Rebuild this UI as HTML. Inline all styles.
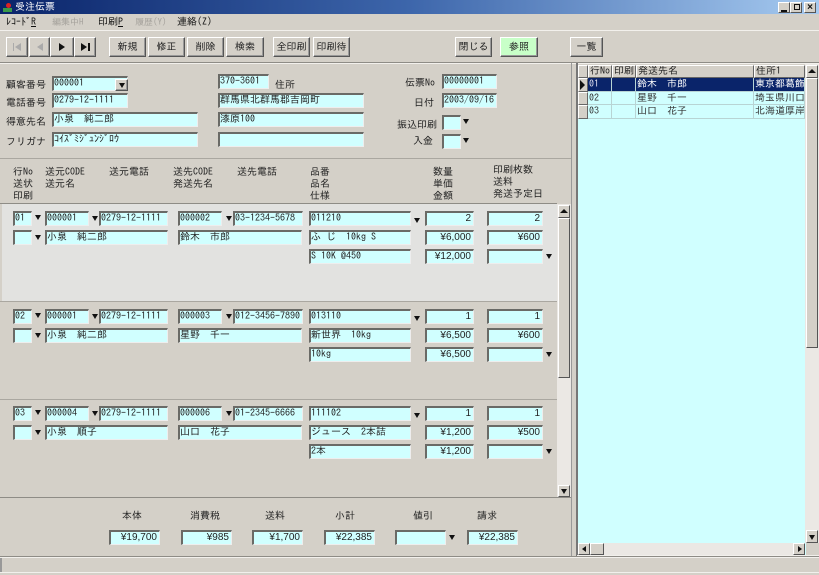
<!DOCTYPE html>
<html><head><meta charset="utf-8"><style>
html,body{margin:0;padding:0}
body{width:819px;height:575px;position:relative;overflow:hidden;background:#d4d0c8;font:10px/13px "IPAGothic","Liberation Sans",sans-serif;color:#111;filter:blur(.3px)}
div,span{position:absolute;box-sizing:border-box;white-space:nowrap}
.f{background:#d0ffff;height:15px;border-top:2px solid #6a6a66;border-left:2px solid #6a6a66;border-right:1px solid #eee;border-bottom:1px solid #eee;padding-left:0;line-height:11px;font-size:10px;color:#222;overflow:hidden}
.r{text-align:right;padding-right:2px;font-family:"Liberation Sans","IPAGothic",sans-serif}
.l{font-size:10px;color:#222}
.b{background:#d4d0c8;border:1px solid;border-color:#fff #555 #555 #fff;box-shadow:inset -1px -1px 0 #999;text-align:center;line-height:18px;height:20px;font-size:10px;color:#222}
.t{width:0;height:0;border-left:3px solid transparent;border-right:3px solid transparent;border-top:5px solid #111}
.u{width:0;height:0;border-left:4px solid transparent;border-right:4px solid transparent;border-bottom:4px solid #111}
.sb{background:#d4d0c8;border:1px solid;border-color:#fff #555 #555 #fff}
.g{font-size:10px;line-height:13px;height:13px;padding-left:1px;overflow:hidden;color:#333;border-right:1px solid #b8d4d4;border-bottom:1px solid #b8d4d4}
.h{background:#d4d0c8;border:1px solid;border-color:#fff #666 #666 #fff;font-size:10px;line-height:11px;padding-left:1px;overflow:hidden;height:13px;color:#222}
.rt{width:0;height:0;border-left:6px solid #111;border-top:4px solid transparent;border-bottom:4px solid transparent}
.lt{width:0;height:0;border-right:6px solid #aaa;border-top:4px solid transparent;border-bottom:4px solid transparent}
</style></head><body>

<!-- title bar -->
<div style="left:0;top:0;width:819px;height:14px;background:linear-gradient(90deg,#0a246a,#3d66ab 50%,#a6caf0)"></div>
<div style="left:6px;top:3px;width:5px;height:5px;background:#d22;border-radius:3px"></div>
<div style="left:3px;top:8px;width:9px;height:4px;background:#3a9a4a"></div>
<span style="left:15px;top:1px;color:#fff;font-size:10px">受注伝票</span>
<div class="sb" style="left:778px;top:2px;width:12px;height:11px"><div style="left:2px;top:7px;width:6px;height:2px;background:#111"></div></div>
<div class="sb" style="left:790px;top:2px;width:12px;height:11px"><div style="left:3px;top:1px;width:6px;height:6px;border:1px solid #111"></div></div>
<div class="sb" style="left:804px;top:2px;width:12px;height:11px;font:bold 10px/9px 'Liberation Sans',sans-serif;text-align:center">×</div>

<!-- menu -->
<span style="left:6px;top:16px;font-size:10px">ﾚｺｰﾄﾞ<u>R</u></span>
<span style="left:52px;top:16px;font-size:9px;color:#a5a29c">編集中H</span>
<span style="left:98px;top:16px;font-size:10px">印刷<u>P</u></span>
<span style="left:135px;top:16px;font-size:9px;color:#a5a29c">履歴(Y)</span>
<span style="left:177px;top:16px;font-size:10px">連絡(Z)</span>
<div style="left:0;top:30px;width:819px;height:1px;background:#f2f0ec"></div>

<!-- toolbar -->
<div class="b" style="left:6px;top:37px;width:22px"><div style="left:6px;top:5px;width:1px;height:8px;background:#aaa"></div><div class="lt" style="left:8px;top:5px"></div></div>
<div class="b" style="left:29px;top:37px;width:21px"><div class="lt" style="left:7px;top:5px"></div></div>
<div class="b" style="left:50px;top:37px;width:24px"><div class="rt" style="left:8px;top:5px"></div></div>
<div class="b" style="left:74px;top:37px;width:22px"><div class="rt" style="left:6px;top:5px"></div><div style="left:13px;top:5px;width:2px;height:8px;background:#111"></div></div>
<div class="b" style="left:109px;top:37px;width:37px">新規</div>
<div class="b" style="left:148px;top:37px;width:37px">修正</div>
<div class="b" style="left:187px;top:37px;width:37px">削除</div>
<div class="b" style="left:226px;top:37px;width:38px">検索</div>
<div class="b" style="left:273px;top:37px;width:37px">全印刷</div>
<div class="b" style="left:313px;top:37px;width:37px">印刷待</div>
<div class="b" style="left:455px;top:37px;width:37px">閉じる</div>
<div class="b" style="left:500px;top:37px;width:38px;background:#c8ffc8">参照</div>
<div class="b" style="left:570px;top:37px;width:33px">一覧</div>
<div style="left:0;top:62px;width:819px;height:1px;background:#8e8c86"></div>
<div style="left:0;top:63px;width:819px;height:1px;background:#f2f0ec"></div>

<!-- header form -->
<span class="l" style="left:6px;top:79px">顧客番号</span>
<div class="f" style="left:52px;top:76px;width:76px">000001</div>
<div class="b" style="left:115px;top:79px;width:13px;height:12px;line-height:10px"><div class="t" style="left:3px;top:3px"></div></div>
<span class="l" style="left:6px;top:97px">電話番号</span>
<div class="f" style="left:52px;top:93px;width:76px">0279-12-1111</div>
<span class="l" style="left:6px;top:116px">得意先名</span>
<div class="f" style="left:52px;top:112px;width:146px">小泉　純二郎</div>
<span class="l" style="left:6px;top:136px">フリガナ</span>
<div class="f" style="left:52px;top:132px;width:146px">ｺｲｽﾞﾐｼﾞｭﾝｼﾞﾛｳ</div>
<div class="f" style="left:218px;top:74px;width:51px">370-3601</div>
<span class="l" style="left:275px;top:79px">住所</span>
<div class="f" style="left:218px;top:93px;width:146px">群馬県北群馬郡吉岡町</div>
<div class="f" style="left:218px;top:112px;width:146px">漆原100</div>
<div class="f" style="left:218px;top:132px;width:146px"></div>
<span class="l" style="left:405px;top:77px">伝票No</span>
<div class="f" style="left:442px;top:74px;width:55px">00000001</div>
<span class="l" style="left:414px;top:97px">日付</span>
<div class="f" style="left:442px;top:93px;width:55px">2003/09/16</div>
<span class="l" style="left:397px;top:119px">振込印刷</span>
<div class="f" style="left:442px;top:115px;width:19px"></div><div class="t" style="left:463px;top:119px"></div>
<span class="l" style="left:413px;top:135px">入金</span>
<div class="f" style="left:442px;top:134px;width:19px"></div><div class="t" style="left:463px;top:138px"></div>
<div style="left:0;top:158px;width:571px;height:1px;background:#aaa7a0"></div>

<!-- column heads -->
<span class="l" style="left:13px;top:166px;line-height:12px">行No<br>送状<br>印刷</span>
<span class="l" style="left:45px;top:166px;line-height:12px">送元CODE<br>送元名</span>
<span class="l" style="left:109px;top:166px;line-height:12px">送元電話</span>
<span class="l" style="left:173px;top:166px;line-height:12px">送先CODE<br>発送先名</span>
<span class="l" style="left:237px;top:166px;line-height:12px">送先電話</span>
<span class="l" style="left:310px;top:166px;line-height:12px">品番<br>品名<br>仕様</span>
<span class="l" style="left:433px;top:166px;line-height:12px">数量<br>単価<br>金額</span>
<span class="l" style="left:493px;top:164px;line-height:12px">印刷枚数<br>送料<br>発送予定日</span>
<div style="left:0;top:203px;width:557px;height:1px;background:#8e8c86"></div>

<!-- row 1 -->
<div style="left:2px;top:204px;width:555px;height:97px;background:#e2e2e0"></div>
<div style="left:0;top:301px;width:557px;height:1px;background:#aaa7a0"></div>
<div class="f" style="left:13px;top:211px;width:19px">01</div><div class="t" style="left:35px;top:215px"></div>
<div class="f" style="left:45px;top:211px;width:44px">000001</div><div class="t" style="left:92px;top:216px"></div>
<div class="f" style="left:99px;top:211px;width:69px">0279-12-1111</div>
<div class="f" style="left:178px;top:211px;width:44px">000002</div><div class="t" style="left:226px;top:216px"></div>
<div class="f" style="left:233px;top:211px;width:70px">03-1234-5678</div>
<div class="f" style="left:309px;top:211px;width:102px">011210</div><div class="t" style="left:414px;top:218px"></div>
<div class="f r" style="left:425px;top:211px;width:49px">2</div>
<div class="f r" style="left:487px;top:211px;width:56px">2</div>
<div class="f" style="left:13px;top:230px;width:19px"></div><div class="t" style="left:35px;top:235px"></div>
<div class="f" style="left:45px;top:230px;width:123px">小泉　純二郎</div>
<div class="f" style="left:178px;top:230px;width:124px">鈴木　市郎</div>
<div class="f" style="left:309px;top:230px;width:102px">ふ じ　10kg S</div>
<div class="f r" style="left:425px;top:230px;width:49px">¥6,000</div>
<div class="f r" style="left:487px;top:230px;width:56px">¥600</div>
<div class="f" style="left:309px;top:249px;width:102px">S 10K @450</div>
<div class="f r" style="left:425px;top:249px;width:49px">¥12,000</div>
<div class="f" style="left:487px;top:249px;width:56px"></div><div class="t" style="left:546px;top:254px"></div>

<!-- row 2 -->
<div style="left:0;top:399px;width:557px;height:1px;background:#aaa7a0"></div>
<div class="f" style="left:13px;top:309px;width:19px">02</div><div class="t" style="left:35px;top:313px"></div>
<div class="f" style="left:45px;top:309px;width:44px">000001</div><div class="t" style="left:92px;top:314px"></div>
<div class="f" style="left:99px;top:309px;width:69px">0279-12-1111</div>
<div class="f" style="left:178px;top:309px;width:44px">000003</div><div class="t" style="left:226px;top:314px"></div>
<div class="f" style="left:233px;top:309px;width:70px">012-3456-7890</div>
<div class="f" style="left:309px;top:309px;width:102px">013110</div><div class="t" style="left:414px;top:316px"></div>
<div class="f r" style="left:425px;top:309px;width:49px">1</div>
<div class="f r" style="left:487px;top:309px;width:56px">1</div>
<div class="f" style="left:13px;top:328px;width:19px"></div><div class="t" style="left:35px;top:333px"></div>
<div class="f" style="left:45px;top:328px;width:123px">小泉　純二郎</div>
<div class="f" style="left:178px;top:328px;width:124px">星野　千一</div>
<div class="f" style="left:309px;top:328px;width:102px">新世界　10kg</div>
<div class="f r" style="left:425px;top:328px;width:49px">¥6,500</div>
<div class="f r" style="left:487px;top:328px;width:56px">¥600</div>
<div class="f" style="left:309px;top:347px;width:102px">10kg</div>
<div class="f r" style="left:425px;top:347px;width:49px">¥6,500</div>
<div class="f" style="left:487px;top:347px;width:56px"></div><div class="t" style="left:546px;top:352px"></div>

<!-- row 3 -->
<div class="f" style="left:13px;top:406px;width:19px">03</div><div class="t" style="left:35px;top:410px"></div>
<div class="f" style="left:45px;top:406px;width:44px">000004</div><div class="t" style="left:92px;top:411px"></div>
<div class="f" style="left:99px;top:406px;width:69px">0279-12-1111</div>
<div class="f" style="left:178px;top:406px;width:44px">000006</div><div class="t" style="left:226px;top:411px"></div>
<div class="f" style="left:233px;top:406px;width:70px">01-2345-6666</div>
<div class="f" style="left:309px;top:406px;width:102px">111102</div><div class="t" style="left:414px;top:413px"></div>
<div class="f r" style="left:425px;top:406px;width:49px">1</div>
<div class="f r" style="left:487px;top:406px;width:56px">1</div>
<div class="f" style="left:13px;top:425px;width:19px"></div><div class="t" style="left:35px;top:430px"></div>
<div class="f" style="left:45px;top:425px;width:123px">小泉　順子</div>
<div class="f" style="left:178px;top:425px;width:124px">山口　花子</div>
<div class="f" style="left:309px;top:425px;width:102px">ジュース　2本詰</div>
<div class="f r" style="left:425px;top:425px;width:49px">¥1,200</div>
<div class="f r" style="left:487px;top:425px;width:56px">¥500</div>
<div class="f" style="left:309px;top:444px;width:102px">2本</div>
<div class="f r" style="left:425px;top:444px;width:49px">¥1,200</div>
<div class="f" style="left:487px;top:444px;width:56px"></div><div class="t" style="left:546px;top:449px"></div>

<!-- left scrollbar -->
<div style="left:557px;top:204px;width:14px;height:293px;background:#ebe8e4"></div>
<div class="sb" style="left:558px;top:205px;width:12px;height:13px"><div class="u" style="left:1px;top:3px"></div></div>
<div class="sb" style="left:558px;top:218px;width:12px;height:160px"></div>
<div class="sb" style="left:558px;top:485px;width:12px;height:12px"><div class="t" style="left:2px;top:3px"></div></div>
<div style="left:571px;top:63px;width:1px;height:494px;background:#999"></div>
<div style="left:576px;top:63px;width:2px;height:494px;background:#777"></div>

<!-- totals -->
<div style="left:0;top:497px;width:571px;height:1px;background:#8e8c86"></div>
<span class="l" style="left:122px;top:510px">本体</span>
<span class="l" style="left:190px;top:510px">消費税</span>
<span class="l" style="left:265px;top:510px">送料</span>
<span class="l" style="left:335px;top:510px">小計</span>
<span class="l" style="left:413px;top:510px">値引</span>
<span class="l" style="left:477px;top:510px">請求</span>
<div class="f r" style="left:109px;top:530px;width:51px">¥19,700</div>
<div class="f r" style="left:181px;top:530px;width:51px">¥985</div>
<div class="f r" style="left:252px;top:530px;width:51px">¥1,700</div>
<div class="f r" style="left:324px;top:530px;width:51px">¥22,385</div>
<div class="f" style="left:395px;top:530px;width:51px"></div><div class="t" style="left:449px;top:535px"></div>
<div class="f r" style="left:467px;top:530px;width:51px">¥22,385</div>

<!-- status bar -->
<div style="left:0;top:556px;width:819px;height:1px;background:#8e8c86"></div>
<div style="left:0;top:557px;width:819px;height:1px;background:#f2f0ec"></div>
<div style="left:0;top:572px;width:819px;height:1px;background:#f2f0ec"></div>
<div style="left:0;top:558px;width:2px;height:14px;background:#999"></div>

<!-- grid -->
<div style="left:578px;top:65px;width:228px;height:490px;background:#d0ffff"></div>
<div class="h" style="left:578px;top:65px;width:10px"></div>
<div class="h" style="left:588px;top:65px;width:24px">行No</div>
<div class="h" style="left:612px;top:65px;width:24px">印刷</div>
<div class="h" style="left:636px;top:65px;width:118px">発送先名</div>
<div class="h" style="left:754px;top:65px;width:51px">住所1</div>
<div class="h" style="left:578px;top:78px;width:10px;height:14px"><div style="left:1px;top:1px;width:0;height:0;border-left:5px solid #111;border-top:5px solid transparent;border-bottom:5px solid transparent"></div></div>
<div class="h" style="left:578px;top:92px;width:10px"></div>
<div class="h" style="left:578px;top:105px;width:10px;height:14px"></div>
<div style="left:588px;top:78px;width:217px;height:14px;background:#0a246a"></div>
<div class="g" style="left:588px;top:78px;width:24px;color:#dde;height:14px">01</div>
<div class="g" style="left:612px;top:78px;width:24px;height:14px"></div>
<div class="g" style="left:636px;top:78px;width:118px;color:#fff;height:14px">鈴木　市郎</div>
<div class="g" style="left:754px;top:78px;width:51px;color:#fff;height:14px">東京都葛飾区</div>
<div class="g" style="left:588px;top:92px;width:24px">02</div>
<div class="g" style="left:612px;top:92px;width:24px"></div>
<div class="g" style="left:636px;top:92px;width:118px">星野　千一</div>
<div class="g" style="left:754px;top:92px;width:51px">埼玉県川口市</div>
<div class="g" style="left:588px;top:105px;width:24px;height:14px">03</div>
<div class="g" style="left:612px;top:105px;width:24px;height:14px"></div>
<div class="g" style="left:636px;top:105px;width:118px;height:14px">山口　花子</div>
<div class="g" style="left:754px;top:105px;width:51px;height:14px">北海道厚岸郡</div>

<!-- grid scrollbars -->
<div style="left:805px;top:64px;width:14px;height:479px;background:#ebe8e4"></div>
<div class="sb" style="left:806px;top:65px;width:12px;height:13px"><div class="u" style="left:1px;top:3px"></div></div>
<div class="sb" style="left:806px;top:78px;width:12px;height:270px"></div>
<div class="sb" style="left:806px;top:530px;width:12px;height:13px"><div class="t" style="left:2px;top:4px"></div></div>
<div style="left:578px;top:543px;width:227px;height:12px;background:#ebe8e4"></div>
<div class="sb" style="left:578px;top:543px;width:12px;height:12px"><div style="left:3px;top:2px;width:0;height:0;border-right:4px solid #111;border-top:3px solid transparent;border-bottom:3px solid transparent"></div></div>
<div class="sb" style="left:590px;top:543px;width:14px;height:12px"></div>
<div class="sb" style="left:793px;top:543px;width:12px;height:12px"><div style="left:4px;top:2px;width:0;height:0;border-left:4px solid #111;border-top:3px solid transparent;border-bottom:3px solid transparent"></div></div>
<div style="left:577px;top:555px;width:242px;height:1px;background:#f2f0ec"></div>
</body></html>
